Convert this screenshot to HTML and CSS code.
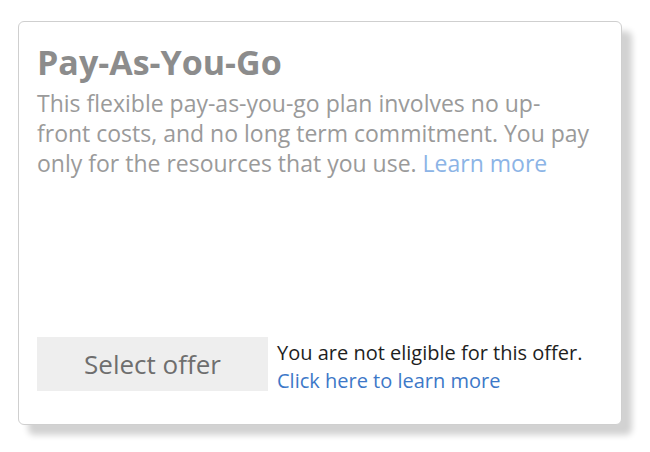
FILE: index.html
```html
<!DOCTYPE html>
<html lang="en">
<head>
    <meta charset="UTF-8">
    <meta name="viewport" content="width=device-width, initial-scale=1.0">
    <title>Pay-As-You-Go</title>
    <link rel="stylesheet" href="styles.css">
</head>
<body>
    <div class="offer-card">
        <h2 class="offer-title">Pay-As-You-Go</h2>
        <p class="offer-description">
            This flexible pay-as-you-go plan involves no up-<br>front costs, and no long term commitment. You pay only for the resources that you use.
            <a href="#" class="learn-more">Learn more</a>
        </p>

        <div class="offer-footer">
            <button class="select-button" disabled>Select offer</button>
            <div class="eligibility">
                <span>You are not eligible for this offer.</span>
                <a href="#" class="eligibility-link">Click here to learn more</a>
            </div>
        </div>
    </div>
</body>
</html>
```

FILE: styles.css
```css
* {
    margin: 0;
    padding: 0;
    box-sizing: border-box;
}

body {
    font-family: 'Open Sans', 'Noto Sans', Arial, sans-serif;
    background: #ffffff;
    padding: 21px 18px;
}

.offer-card {
    width: 604px;
    height: 404px;
    border: 1px solid #cfcfcf;
    border-radius: 6px;
    background: #ffffff;
    padding: 19px 18px 29px;
    display: flex;
    flex-direction: column;
    box-shadow: 10px 10px 6px #d2d2d2;
}

.offer-title {
    font-size: 34px;
    font-weight: bold;
    color: #8c8c8c;
    line-height: 42px;
}

.offer-description {
    margin-top: 5px;
    font-size: 23px;
    color: #9a9a9a;
    line-height: 30px;
}

.learn-more {
    color: #8cb4e6;
    text-decoration: none;
}

.offer-footer {
    margin-top: auto;
    display: flex;
    align-items: center;
    gap: 9px;
}

.select-button {
    width: 231px;
    height: 54px;
    border: none;
    background: #eeeeee;
    color: #6e6e6e;
    font-family: inherit;
    font-size: 26px;
}

.eligibility {
    display: flex;
    flex-direction: column;
    padding-top: 6px;
    font-size: 20px;
    line-height: 28px;
    color: #1e1e1e;
}

.eligibility-link {
    color: #3d78c8;
    text-decoration: none;
}
```
